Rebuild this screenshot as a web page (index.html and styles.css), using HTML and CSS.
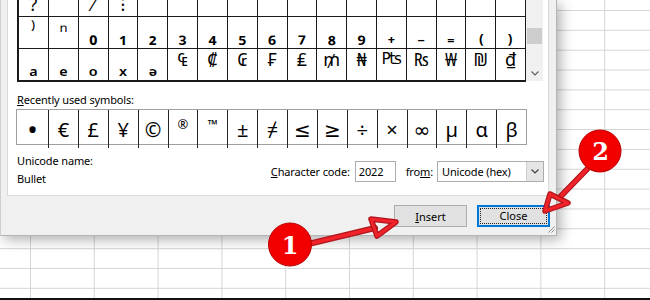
FILE: index.html
```html
<!DOCTYPE html>
<html lang="en">
<head>
  <meta charset="UTF-8">
  <meta name="viewport" content="width=device-width, initial-scale=1.0">
  <title>Symbol</title>
  <link rel="stylesheet" href="styles.css">
</head>
<body>
  <div class="sheet">
    <div class="dialog">
      <div class="panel">
        <!-- Symbol chart -->
        <div class="chart">
          <div class="grid">
            <div class="c t">?</div>
            <div class="c"></div>
            <div class="c t">⁄</div>
            <div class="c t">⁝</div>
            <div class="c"></div>
            <div class="c"></div>
            <div class="c"></div>
            <div class="c"></div>
            <div class="c"></div>
            <div class="c"></div>
            <div class="c"></div>
            <div class="c"></div>
            <div class="c"></div>
            <div class="c"></div>
            <div class="c"></div>
            <div class="c"></div>
            <div class="c"></div>

            <div class="c sup">⁾</div>
            <div class="c sup">ⁿ</div>
            <div class="c sub">₀</div>
            <div class="c sub">₁</div>
            <div class="c sub">₂</div>
            <div class="c sub">₃</div>
            <div class="c sub">₄</div>
            <div class="c sub">₅</div>
            <div class="c sub">₆</div>
            <div class="c sub">₇</div>
            <div class="c sub">₈</div>
            <div class="c sub">₉</div>
            <div class="c sub">₊</div>
            <div class="c sub">₋</div>
            <div class="c sub">₌</div>
            <div class="c sub">₍</div>
            <div class="c sub">₎</div>

            <div class="c sub">ₐ</div>
            <div class="c sub">ₑ</div>
            <div class="c sub">ₒ</div>
            <div class="c sub">ₓ</div>
            <div class="c sub">ₔ</div>
            <div class="c">₠</div>
            <div class="c">₡</div>
            <div class="c">₢</div>
            <div class="c">₣</div>
            <div class="c">₤</div>
            <div class="c">₥</div>
            <div class="c">₦</div>
            <div class="c alt">₧</div>
            <div class="c">₨</div>
            <div class="c">₩</div>
            <div class="c">₪</div>
            <div class="c">₫</div>
          </div>
          <div class="scrollbar">
            <div class="thumb"></div>
            <svg width="8" height="5" viewBox="0 0 8 5"><polyline points="0.5,0.5 4,4 7.5,0.5" fill="none" stroke="#606060" stroke-width="1.2"/></svg>
          </div>
        </div>

        <p class="label"><u>R</u>ecently used symbols:</p>
        <div class="recent">
          <div class="r big">•</div>
          <div class="r">€</div>
          <div class="r">£</div>
          <div class="r">¥</div>
          <div class="r">©</div>
          <div class="r small">®</div>
          <div class="r small">™</div>
          <div class="r">±</div>
          <div class="r">≠</div>
          <div class="r">≤</div>
          <div class="r">≥</div>
          <div class="r">÷</div>
          <div class="r">×</div>
          <div class="r">∞</div>
          <div class="r">µ</div>
          <div class="r">α</div>
          <div class="r">β</div>
        </div>

        <div class="info">
          <div class="name">
            <p>Unicode name:</p>
            <p>Bullet</p>
          </div>
          <div class="code">
            <label class="code-label"><u>C</u>haracter code:</label>
            <div class="input">2022</div>
            <label class="from-label">fro<u>m</u>:</label>
            <div class="select">
              <span class="value">Unicode (hex)</span>
              <span class="drop"><svg width="8" height="5" viewBox="0 0 8 5"><polyline points="0.5,0.5 4,4 7.5,0.5" fill="none" stroke="#404040" stroke-width="1.2"/></svg></span>
            </div>
          </div>
        </div>
      </div>

      <div class="buttons">
        <button class="btn"><u>I</u>nsert</button>
        <button class="btn focus"><span>Close</span></button>
      </div>

      <svg class="grip" width="8" height="8" viewBox="0 0 8 8"><path d="M7.5 1.5 L1.5 7.5 M7.5 4.5 L4.5 7.5" stroke="#8c8c8c" stroke-width="1" fill="none"/></svg>
    </div>

    <!-- Callouts -->
    <svg class="marks" width="650" height="300" viewBox="0 0 650 300">
      <g fill="none" stroke-linecap="round" stroke-linejoin="round">
        <line x1="300" y1="246" x2="375" y2="228" stroke="#b0151b" stroke-width="6"/>
        <line x1="300" y1="246" x2="375" y2="228" stroke="#f0232a" stroke-width="3.5"/>
        <polygon points="371,219 396,222 377,236" stroke="#b0151b" stroke-width="5.5"/>
        <polygon points="371,219 396,222 377,236" stroke="#f0232a" stroke-width="3"/>

        <line x1="596" y1="160" x2="560" y2="197" stroke="#b0151b" stroke-width="6"/>
        <line x1="596" y1="160" x2="560" y2="197" stroke="#f0232a" stroke-width="3.5"/>
        <polygon points="550,194 568,203 545,211" stroke="#b0151b" stroke-width="5.5"/>
        <polygon points="550,194 568,203 545,211" stroke="#f0232a" stroke-width="3"/>
      </g>
      <circle cx="290" cy="244.5" r="21.5" fill="#f20000" stroke="#b80000" stroke-width="1"/>
      <text class="num" x="290" y="254">1</text>
      <circle cx="600" cy="151" r="21" fill="#f20000" stroke="#b80000" stroke-width="1"/>
      <text class="num" x="600.5" y="160">2</text>
    </svg>
  </div>
</body>
</html>
```

FILE: styles.css
```css
/* General Styles */
body {
  margin: 0;
  font-family: "Noto Sans", "DejaVu Sans", sans-serif;
  color: #000;
}

/* Spreadsheet behind the dialog */
.sheet {
  position: relative;
  width: 650px;
  height: 300px;
  box-sizing: border-box;
  border-bottom: 2px solid #111;
  overflow: hidden;
  background-color: #fff;
  background-image:
    linear-gradient(to right, #d6d6d6 1px, transparent 1px),
    linear-gradient(to bottom, #d6d6d6 1px, transparent 1px);
  background-size: 63.8px 19.85px;
  background-position: 30px 10px;
}

/* Symbol dialog */
.dialog {
  position: relative;
  width: 557px;
  height: 236px;
  box-sizing: border-box;
  padding: 0 6px 8px;
  background-color: #f0f0f0;
  border-left: 1px solid #cfcfcf;
  border-right: 1px solid #b4b4b4;
  border-bottom: 1px solid #b4b4b4;
  box-shadow: 4px 4px 12px rgba(0, 0, 0, 0.3);
  font-size: 11px;
  letter-spacing: -0.15px;
}

.panel {
  width: 542px;
  height: 196px;
  box-sizing: border-box;
  padding: 0 4px 0 9px;
  background-color: #fff;
  border: 1px solid #d9d9d9;
  border-top: none;
  overflow: hidden;
}

/* Character grid */
.chart {
  display: flex;
  align-items: flex-start;
}

.grid {
  width: 509px;
  box-sizing: border-box;
  margin-top: -16px;
  display: grid;
  grid-template-columns: 29px repeat(16, 1fr);
  border: 1px solid #1a1a1a;
  border-left-width: 2px;
  border-bottom-width: 2px;
  letter-spacing: 0;
}

.c {
  height: 31px;
  display: flex;
  justify-content: center;
  align-items: flex-start;
  border-left: 1px solid #1a1a1a;
  font-size: 18px;
  line-height: 20px;
}

.c:nth-child(17n+1) {
  border-left: none;
}

.c:nth-child(n+18) {
  border-top: 1px solid #1a1a1a;
}

.c.t {
  height: 29px;
  padding-bottom: 2px;
  align-items: flex-end;
}

.c.sup {
  height: 27px;
  padding-top: 4px;
  font-size: 20px;
}

.c.sub {
  height: 25px;
  padding-top: 6px;
  font-size: 22px;
  font-weight: 600;
}

.c.alt {
  font-family: "DejaVu Sans", sans-serif;
  font-size: 16px;
  letter-spacing: -0.5px;
}

.scrollbar {
  width: 17px;
  height: 81px;
  display: flex;
  flex-direction: column;
  align-items: center;
  background-color: #f0f0f0;
}

.thumb {
  width: 15px;
  height: 16px;
  margin-top: 28px;
  background-color: #cdcdcd;
}

.scrollbar svg {
  margin-top: auto;
  margin-bottom: 5px;
}

/* Recently used */
.label {
  margin: 10px 0 1px;
  line-height: 16px;
}

.recent {
  width: 511px;
  height: 36px;
  box-sizing: border-box;
  margin-left: -1px;
  display: grid;
  grid-template-columns: 31px repeat(16, 1fr);
  border: 1px solid #a0a0a0;
  letter-spacing: 0;
}

.r {
  display: flex;
  justify-content: center;
  align-items: center;
  border-left: 1px solid #262626;
  font-size: 20px;
}

.r:first-child {
  border-left: none;
}

.r.big {
  font-size: 28px;
}

.r.small {
  align-items: flex-start;
  padding-top: 5px;
  font-size: 13px;
}

/* Name and code */
.info {
  display: flex;
  justify-content: space-between;
  align-items: flex-start;
  margin-top: 7px;
}

.info p {
  margin: 0;
  line-height: 18px;
}

.code {
  display: flex;
  align-items: center;
  margin-top: 9px;
}

.code-label {
  margin-right: 5px;
}

.from-label {
  margin-right: 4px;
}

.input {
  width: 41px;
  height: 21px;
  box-sizing: border-box;
  padding-left: 3px;
  margin-right: 10px;
  border: 1px solid #abadb3;
  line-height: 19px;
}

.select {
  display: flex;
  width: 107px;
  height: 21px;
  box-sizing: border-box;
  border: 1px solid #adadad;
  line-height: 19px;
}

.select .value {
  flex: 1;
  padding-left: 4px;
}

.drop {
  width: 16px;
  display: flex;
  justify-content: center;
  align-items: center;
  background-color: #e5e5e5;
  border-left: 1px solid #cfcfcf;
}

/* Buttons */
.buttons {
  display: flex;
  justify-content: flex-end;
  gap: 10px;
  margin-top: 9px;
}

.btn {
  width: 73px;
  height: 22px;
  box-sizing: border-box;
  padding: 0;
  border: 1px solid #adadad;
  background-color: #e1e1e1;
  font-family: inherit;
  font-size: 11px;
  color: #000;
}

.btn.focus {
  border: 2px solid #0078d7;
  padding: 1px;
}

.btn.focus span {
  display: block;
  border: 1px dotted #222;
  line-height: 14px;
}

.grip {
  position: absolute;
  right: 1px;
  bottom: 2px;
}

/* Red callouts */
.marks {
  position: absolute;
  left: 0;
  top: 0;
  pointer-events: none;
}

.num {
  font-family: "DejaVu Serif", serif;
  font-weight: bold;
  font-size: 24px;
  fill: #fff;
  text-anchor: middle;
}
```
